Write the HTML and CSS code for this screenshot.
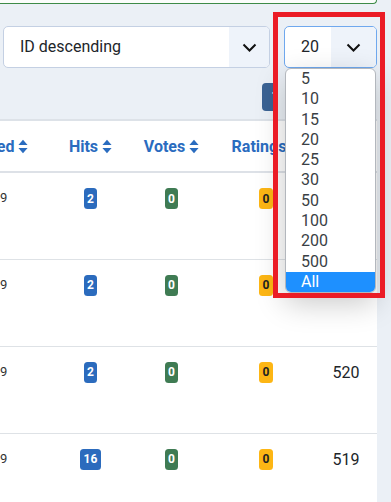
FILE: index.html
```html
<!DOCTYPE html>
<html>
<head>
  <meta charset="utf-8">
  <link rel="stylesheet" href="styles.css">
</head>
<body>
  <div class="notice"></div>

  <div class="toolbar">
    <div class="select select-order">
      <div class="select-value">ID descending</div>
      <div class="select-arrow">
        <svg width="15" height="9" viewBox="0 0 15 9"><path d="M1.5 1.5 L7.5 7.5 L13.5 1.5" fill="none" stroke="#111" stroke-width="2"/></svg>
      </div>
    </div>
    <div class="select select-limit">
      <div class="select-value">20</div>
      <div class="select-arrow">
        <svg width="15" height="9" viewBox="0 0 15 9"><path d="M1.5 1.5 L7.5 7.5 L13.5 1.5" fill="none" stroke="#111" stroke-width="2"/></svg>
      </div>
    </div>
  </div>

  <div class="pager">
    <div class="page-btn">1</div>
  </div>

  <div class="table-wrap">
    <table class="items">
      <colgroup>
        <col class="col-date">
        <col class="col-hits">
        <col class="col-votes">
        <col class="col-ratings">
        <col class="col-id">
      </colgroup>
      <thead>
        <tr>
          <th class="left">Created <svg class="sort" width="10" height="15" viewBox="0 0 10 15"><path d="M5 0.8 L9.6 6 L0.4 6 Z M0.4 9 L9.6 9 L5 14.2 Z" fill="#2a6cbf"/></svg></th>
          <th>Hits <svg class="sort" width="10" height="15" viewBox="0 0 10 15"><path d="M5 0.8 L9.6 6 L0.4 6 Z M0.4 9 L9.6 9 L5 14.2 Z" fill="#2a6cbf"/></svg></th>
          <th>Votes <svg class="sort" width="10" height="15" viewBox="0 0 10 15"><path d="M5 0.8 L9.6 6 L0.4 6 Z M0.4 9 L9.6 9 L5 14.2 Z" fill="#2a6cbf"/></svg></th>
          <th>Ratings <svg class="sort" width="10" height="15" viewBox="0 0 10 15"><path d="M5 0.8 L9.6 6 L0.4 6 Z M0.4 9 L9.6 9 L5 14.2 Z" fill="#2a6cbf"/></svg></th>
          <th>ID <svg class="sort" width="10" height="15" viewBox="0 0 10 15"><path d="M5 0.8 L9.6 6 L0.4 6 Z M0.4 9 L9.6 9 L5 14.2 Z" fill="#2a6cbf"/></svg></th>
        </tr>
      </thead>
      <tbody>
        <tr>
          <td class="left date">10.2019</td>
          <td><span class="badge blue">2</span></td>
          <td><span class="badge green">0</span></td>
          <td><span class="badge yellow">0</span></td>
          <td class="num">522</td>
        </tr>
        <tr>
          <td class="left date">10.2019</td>
          <td><span class="badge blue">2</span></td>
          <td><span class="badge green">0</span></td>
          <td><span class="badge yellow">0</span></td>
          <td class="num">521</td>
        </tr>
        <tr>
          <td class="left date">10.2019</td>
          <td><span class="badge blue">2</span></td>
          <td><span class="badge green">0</span></td>
          <td><span class="badge yellow">0</span></td>
          <td class="num">520</td>
        </tr>
        <tr>
          <td class="left date">10.2019</td>
          <td><span class="badge blue">16</span></td>
          <td><span class="badge green">0</span></td>
          <td><span class="badge yellow">0</span></td>
          <td class="num">519</td>
        </tr>
      </tbody>
    </table>
  </div>

  <!-- open list of the limit select -->
  <ul class="dropdown">
    <li>5</li>
    <li>10</li>
    <li>15</li>
    <li>20</li>
    <li>25</li>
    <li>30</li>
    <li>50</li>
    <li>100</li>
    <li>200</li>
    <li>500</li>
    <li class="active">All</li>
  </ul>

  <div class="highlight"></div>
</body>
</html>
```

FILE: styles.css
```css
body {
  margin: 0;
  font-family: Roboto, "Noto Sans", sans-serif;
  font-size: 16px;
  color: #212529;
  background: #ebf0f6;
}

/* bottom edge of the message box above */
.notice {
  width: 376px;
  height: 3px;
  background: #fbfdfb;
  border-right: 1px solid #3d8b47;
  border-bottom: 1px solid #3d8b47;
  border-radius: 0 0 6px 0;
}

.toolbar {
  display: flex;
  gap: 14px;
  padding: 22px 0 0 3px;
}

.select {
  display: flex;
  height: 42px;
  box-sizing: border-box;
  background: #fff;
  border: 1px solid #c4d0e3;
  border-radius: 5px;
  overflow: hidden;
}

.select-order {
  width: 267px;
}

.select-limit {
  width: 93px;
  border-color: #6fa8ee;
}

.select-value {
  flex: 1;
  padding-left: 16px;
  line-height: 40px;
  font-size: 16px;
  color: #212529;
}

.select-arrow {
  width: 40px;
  background: #eef3fa;
  display: flex;
  align-items: center;
  justify-content: center;
}

.select-limit .select-arrow {
  width: 45px;
}

.pager {
  display: flex;
  margin-top: 15px;
  padding-left: 262px;
  height: 28px;
}

.page-btn {
  width: 15px;
  padding-left: 9px;
  box-sizing: border-box;
  overflow: hidden;
  background: #3b6394;
  color: #fff;
  border-radius: 4px 0 0 4px;
  font-size: 15px;
  line-height: 28px;
}

.table-wrap {
  width: 377px;
  margin-top: 8px;
  overflow: hidden;
  background: #fff;
  border-top: 2px solid #dde2e8;
}

.items {
  border-collapse: collapse;
  table-layout: fixed;
  width: 419px;
  margin-left: -42px;
}

.col-date { width: 92px; }
.col-hits { width: 81px; }
.col-votes { width: 81px; }
.col-ratings { width: 108px; }
.col-id { width: 57px; }

.items th {
  height: 50px;
  padding: 0;
  font-size: 16px;
  font-weight: 700;
  color: #2a6cbf;
  text-align: center;
  white-space: nowrap;
  border-bottom: 2px solid #dde1e7;
}

.items td {
  height: 87px;
  padding: 15px 0 0;
  box-sizing: border-box;
  vertical-align: top;
  line-height: 21px;
  text-align: center;
  border-bottom: 1px solid #dee2e6;
}

.items .left {
  text-align: left;
}

.sort {
  vertical-align: -2px;
}

.items td.date {
  font-size: 13px;
  padding-top: 14px;
  padding-left: 2px;
  white-space: nowrap;
  color: #333;
}

.items td.num {
  font-size: 16px;
  padding-right: 5px;
}

.badge {
  display: inline-block;
  min-width: 6px;
  padding: 4.5px 3.5px;
  font-size: 12px;
  font-weight: 700;
  line-height: 12px;
  border-radius: 3.5px;
  color: #fff;
  vertical-align: top;
}

.badge.blue { background: #2b6bbd; }
.badge.green { background: #3f7b53; }
.badge.yellow { background: #fdb614; color: #222; }

.dropdown {
  position: absolute;
  left: 285px;
  top: 68px;
  width: 91px;
  box-sizing: border-box;
  margin: 0;
  padding: 0;
  list-style: none;
  background: #fff;
  border: 1px solid #b3b7bd;
  border-radius: 6px;
  overflow: hidden;
  box-shadow: 0 10px 30px rgba(0, 0, 0, 0.22);
}

.dropdown li {
  height: 20.3px;
  line-height: 20.3px;
  padding-left: 15px;
  font-size: 16px;
  color: #3a3f45;
}

.dropdown li.active {
  background: #1e90ff;
  color: #fff;
}

/* red annotation frame */
.highlight {
  position: absolute;
  left: 273px;
  top: 12px;
  width: 112px;
  height: 286px;
  box-sizing: border-box;
  border: 5px solid #eb1c26;
}
```
